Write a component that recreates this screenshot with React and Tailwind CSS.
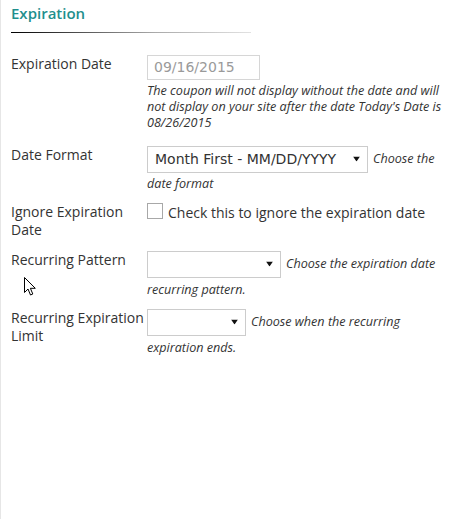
import { useState } from "react";

const font = { fontFamily: '"Open Sans", "Noto Sans", sans-serif' };

const Arrow = () => (
  <svg
    width="7"
    height="5"
    viewBox="0 0 7 5"
    className="pointer-events-none absolute right-[8px] top-1/2 -translate-y-1/2"
  >
    <path d="M0 0 H7 L3.5 5 Z" fill="#111" />
  </svg>
);

const SelectBox = ({ width, value, options = [], onChange }) => (
  <div className={`relative shrink-0 ${width}`}>
    <select
      value={value}
      onChange={(e) => onChange(e.target.value)}
      className="h-[27px] w-full appearance-none border border-[#cccccc] bg-white pl-[7px] pr-[20px] text-[14px] text-[#333] outline-none font-['DejaVu_Sans',sans-serif]"
    >
      {options.map((option) => (
        <option key={option} value={option}>
          {option}
        </option>
      ))}
    </select>
    <Arrow />
  </div>
);

const Row = ({ label, children, className = "" }) => (
  <div className={`flex items-start ${className}`}>
    <div className="w-[136px] shrink-0 text-[14px] leading-[18px] text-[#333]">{label}</div>
    <div className="min-w-0 flex-1">{children}</div>
  </div>
);

const helpCls = "text-[12.6px] italic leading-[16px] text-[#333]";

const Cursor = () => (
  <svg
    width="13"
    height="20"
    viewBox="0 0 13 20"
    className="pointer-events-none absolute left-[23px] top-[277px]"
  >
    <path
      d="M0.5 0.5 L0.5 15.5 L4 12 L6.5 18 L8.8 17 L6.4 11.3 L11.3 11.3 Z"
      fill="#fff"
      stroke="#000"
      strokeWidth="1"
      strokeLinejoin="miter"
    />
  </svg>
);

export default function App() {
  const [format, setFormat] = useState("Month First - MM/DD/YYYY");
  const [pattern, setPattern] = useState("");
  const [limit, setLimit] = useState("");
  const [ignore, setIgnore] = useState(false);

  return (
    <div className="relative h-[519px] w-[466px] overflow-hidden border-l border-[#e6e6e6] bg-white" style={font}>
      <div className="pl-[10px] pt-[2px]">
        <h2 className="text-[15px] font-semibold leading-[22px] text-[#1f8f8d]">Expiration</h2>
        <div className="mt-[8px] h-px w-[240px] bg-[linear-gradient(90deg,#000_0%,#555_30%,#aaa_60%,#e2e2e2_100%)]" />
      </div>

      <div className="pl-[10px] pr-[12px] pt-[21px]">
        <Row label={<div className="pt-[1px]">Expiration Date</div>}>
          <input
            type="text"
            defaultValue="09/16/2015"
            className="h-[25px] w-[113px] border border-[#d6d6d6] bg-white px-[6px] text-[14px] text-[#9a9a9a] outline-none font-['DejaVu_Sans',sans-serif]"
          />
          <p className={`mt-[3px] ${helpCls}`}>
            The coupon will not display without the date and will not display on your site after the
            date Today's Date is 08/26/2015
          </p>
        </Row>

        <Row label="Date Format" className="mt-[15px]">
          <div className="flex items-center">
            <SelectBox
              width="w-[221px]"
              value={format}
              onChange={setFormat}
              options={["Month First - MM/DD/YYYY", "Day First - DD/MM/YYYY"]}
            />
            <span className={`ml-[5px] ${helpCls}`}>Choose the</span>
          </div>
          <p className={`mt-[3px] ${helpCls}`}>date format</p>
        </Row>

        <Row label="Ignore Expiration Date" className="mt-[11px]">
          <label className="flex items-start text-[14px] leading-[20px] text-[#333]">
            <span
              onClick={() => setIgnore(!ignore)}
              className="mr-[5px] h-[16px] w-[16px] shrink-0 border border-[#a8a8a8] bg-white text-center text-[12px] leading-[14px]"
            >
              {ignore ? "✓" : ""}
            </span>
            <span>Check this to ignore the expiration date</span>
          </label>
        </Row>

        <Row label="Recurring Pattern" className="mt-[12px]">
          <div className="flex items-center">
            <SelectBox width="w-[134px]" value={pattern} onChange={setPattern} options={[""]} />
            <span className={`ml-[5px] ${helpCls}`}>Choose the expiration date</span>
          </div>
          <p className={`mt-[4px] ${helpCls}`}>recurring pattern.</p>
        </Row>

        <Row label="Recurring Expiration Limit" className="mt-[11px]">
          <div className="flex items-center">
            <SelectBox width="w-[99px]" value={limit} onChange={setLimit} options={[""]} />
            <span className={`ml-[5px] ${helpCls}`}>Choose when the recurring</span>
          </div>
          <p className={`mt-[4px] ${helpCls}`}>expiration ends.</p>
        </Row>
      </div>

      <Cursor />
    </div>
  );
}
